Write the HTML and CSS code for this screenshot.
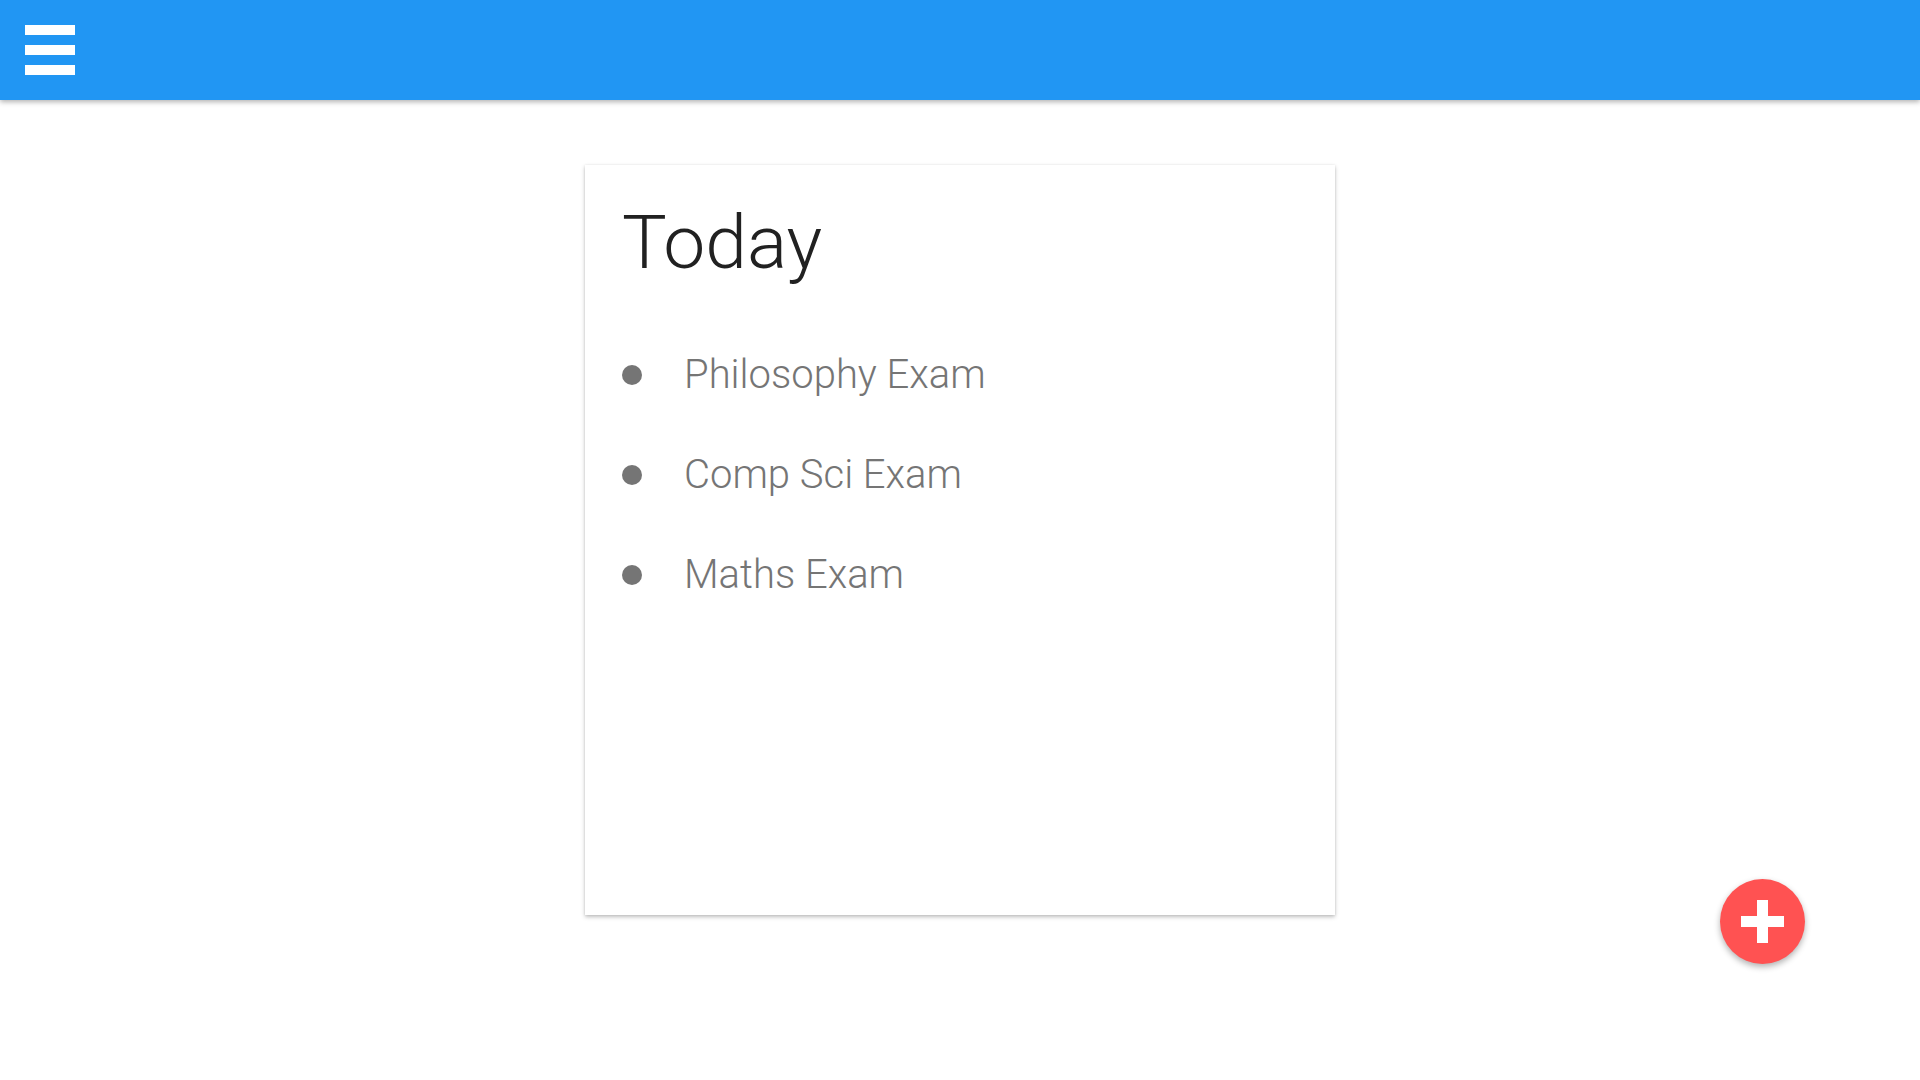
FILE: index.html
```html
<!DOCTYPE html>
<html>
<head>
<meta charset="utf-8">
<link rel="stylesheet" href="styles.css">
</head>
<body>
<header class="appbar">
  <button class="menu" aria-label="Menu">
    <span class="bar"></span><span class="bar"></span><span class="bar"></span>
  </button>
</header>
<main class="content">
  <section class="card">
    <h1 class="title">Today</h1>
    <ul class="list">
      <li class="item"><span class="dot"></span><span class="label">Philosophy Exam</span></li>
      <li class="item"><span class="dot"></span><span class="label">Comp Sci Exam</span></li>
      <li class="item"><span class="dot"></span><span class="label">Maths Exam</span></li>
    </ul>
  </section>
</main>
<button class="fab" aria-label="Add">
  <span class="plus-h"></span><span class="plus-v"></span>
</button>
</body>
</html>
```
FILE: styles.css
```css
html, body {
  margin: 0;
  padding: 0;
  background: #ffffff;
  font-family: Roboto, "Liberation Sans", sans-serif;
  min-height: 1080px;
}
.appbar {
  height: 100px;
  background: #2196F3;
  box-shadow: 0 2px 5px rgba(0,0,0,0.3);
  display: flex;
  align-items: center;
  padding-left: 25px;
  position: relative;
  z-index: 2;
}
.menu {
  width: 50px;
  height: 50px;
  padding: 0;
  border: 0;
  background: transparent;
  display: flex;
  flex-direction: column;
  justify-content: space-between;
}
.bar {
  display: block;
  height: 10px;
  width: 50px;
  background: #ffffff;
}
.content {
  display: flex;
  justify-content: center;
  padding-top: 65px;
  padding-bottom: 80px;
}
.card {
  width: 750px;
  height: 750px;
  box-sizing: border-box;
  background: #fff;
  box-shadow: 0 2px 4px rgba(0,0,0,0.25), 0 0 2px rgba(0,0,0,0.08);
  padding: 39px 37px 0 37px;
}
.title {
  margin: 0;
  font-size: 75px;
  line-height: 76px;
  font-weight: 300;
  color: #212121;
}
.list {
  list-style: none;
  margin: 45px 0 0 0;
  padding: 0;
}
.item {
  display: flex;
  align-items: center;
  height: 100px;
}
.dot {
  width: 20px;
  height: 20px;
  border-radius: 50%;
  background: #757575;
  flex: none;
  margin-top: -1px;
}
.label {
  margin-left: 42px;
  font-size: 40px;
  line-height: 100px;
  font-weight: 300;
  color: #757575;
}
.fab {
  position: fixed;
  right: 115px;
  bottom: 116px;
  width: 85px;
  height: 85px;
  border-radius: 50%;
  border: 0;
  padding: 0;
  background: #FF5252;
  box-shadow: 0 3px 6px rgba(0,0,0,0.3);
}
.plus-h {
  position: absolute;
  left: 21px;
  top: 37px;
  width: 43px;
  height: 11px;
  background: #fff;
}
.plus-v {
  position: absolute;
  left: 37px;
  top: 21px;
  width: 11px;
  height: 43px;
  background: #fff;
}
```
